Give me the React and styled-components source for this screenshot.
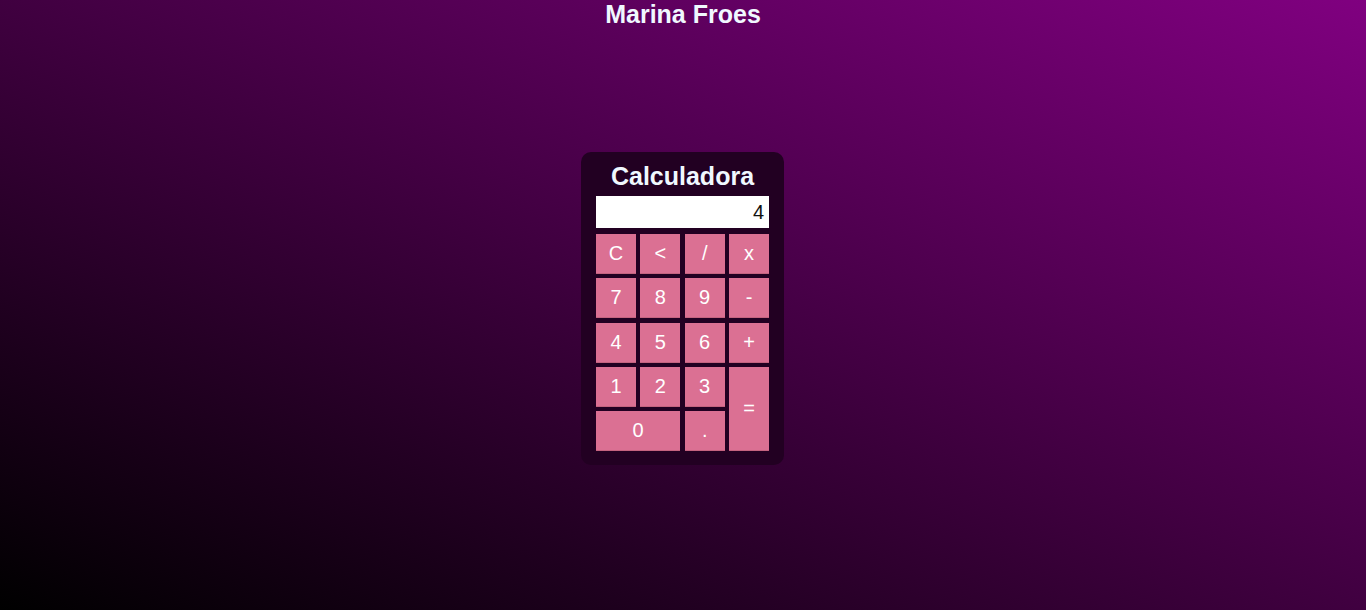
import React, { useState } from 'react';
import styled, { createGlobalStyle } from 'styled-components';

const GlobalStyle = createGlobalStyle`
  html, body {
    margin: 0;
    padding: 0;
  }

  body {
    font-family: "Liberation Sans", Arial, sans-serif;
    background: linear-gradient(to top right, #000000, #800080);
    min-height: 100vh;
  }
`;

const Page = styled.div`
  display: flex;
  flex-direction: column;
  min-height: 100vh;
`;

const Title = styled.h1`
  margin: 0;
  font-size: 25px;
  line-height: 29px;
  text-align: center;
  color: #f0f8ff;
`;

const Main = styled.main`
  flex: 1;
  display: flex;
  align-items: center;
  justify-content: center;
  padding: 0 1px 22px 0;
`;

const Card = styled.div`
  width: 173px;
  padding: 10px 15px 14px;
  border-radius: 10px;
  background-color: #220022;
`;

const CardTitle = styled.h2`
  margin: 0 0 5px;
  font-size: 25px;
  line-height: 29px;
  text-align: center;
  color: #f0f8ff;
`;

const Display = styled.div`
  box-sizing: border-box;
  height: 32px;
  padding: 0 5px;
  background-color: #ffffff;
  color: #111111;
  font-size: 20px;
  line-height: 32px;
  text-align: right;
`;

const Keys = styled.div`
  display: grid;
  grid-template-columns: repeat(4, 1fr);
  grid-template-rows: repeat(5, 40px);
  column-gap: 4.33px;
  row-gap: 4.25px;
  margin-top: 6px;
`;

const Key = styled.button`
  grid-column: ${({ $wide }) => ($wide ? 'span 2' : 'auto')};
  grid-row: ${({ $tall }) => ($tall ? 'span 2' : 'auto')};
  border: none;
  border-bottom: 1px solid #c4637f;
  padding: 0;
  background-color: #db7093;
  color: #ffffff;
  font-family: "Liberation Sans", Arial, sans-serif;
  font-size: 20px;
  cursor: pointer;

  &:hover {
    background-color: #e37fa0;
  }
`;

const keys = [
  { label: 'C' },
  { label: '<' },
  { label: '/' },
  { label: 'x' },
  { label: '7' },
  { label: '8' },
  { label: '9' },
  { label: '-' },
  { label: '4' },
  { label: '5' },
  { label: '6' },
  { label: '+' },
  { label: '1' },
  { label: '2' },
  { label: '3' },
  { label: '=', tall: true },
  { label: '0', wide: true },
  { label: '.' },
];

function App() {
  const [value, setValue] = useState('4');

  const press = (label) => {
    if (label === 'C') return setValue('');
    if (label === '<') return setValue((v) => v.slice(0, -1));
    if (label === '=') {
      try {
        // eslint-disable-next-line no-new-func
        const result = Function(`return (${value.replace(/x/g, '*')})`)();
        setValue(String(result));
      } catch (e) {
        setValue('Erro');
      }
      return;
    }
    setValue((v) => v + label);
  };

  return (
    <Page>
      <GlobalStyle />
      <Title>Marina Froes</Title>
      <Main>
        <Card>
          <CardTitle>Calculadora</CardTitle>
          <Display>{value}</Display>
          <Keys>
            {keys.map((k) => (
              <Key
                key={k.label}
                $wide={k.wide}
                $tall={k.tall}
                onClick={() => press(k.label)}
              >
                {k.label}
              </Key>
            ))}
          </Keys>
        </Card>
      </Main>
    </Page>
  );
}

export default App;
